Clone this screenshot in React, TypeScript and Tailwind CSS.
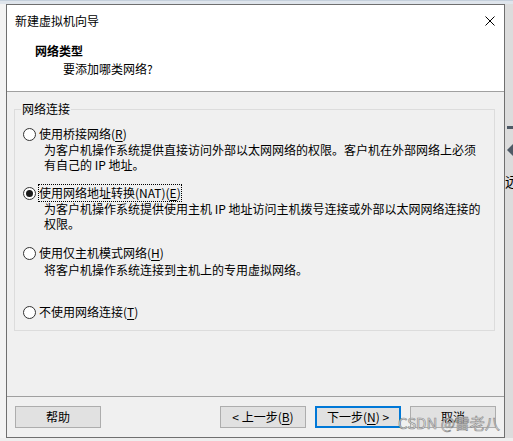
import React from "react";

const FONT = { fontFamily: '"Noto Sans CJK SC", "Noto Sans", sans-serif' };

function Radio({ checked }: { checked?: boolean }) {
  return (
    <span className="w-[13px] h-[13px] rounded-full border border-[#333333] bg-white flex items-center justify-center shrink-0">
      {checked ? <span className="w-[7px] h-[7px] rounded-full bg-[#1a1a1a]" /> : null}
    </span>
  );
}

function Btn({ children, primary }: { children: React.ReactNode; primary?: boolean }) {
  return (
    <div
      className={
        "w-[86px] h-[22px] flex items-center justify-center text-[12px] leading-[16px] text-black bg-[#e1e1e1] " +
        (primary ? "border-2 border-[#0078d7]" : "border border-[#adadad]")
      }
    >
      {children}
    </div>
  );
}

export default function App() {
  return (
    <div className="relative w-[513px] h-[441px] overflow-hidden flex flex-col bg-[#f2f2f2]" style={FONT}>
      <div className="h-[4px] bg-[#dfe5ec] border-t border-[#c5d0dc]" />
      <div className="flex h-[434px]">
        <div className="w-[6px] bg-[#f3f3f3]" />
        <div className="w-[499px] border border-[#6f6f6f] flex flex-col bg-[#f0f0f0]">
          {/* title bar */}
          <div className="h-[31px] bg-white flex items-center justify-between pl-[8px] pr-[9px]">
            <span className="text-[12px] leading-[16px] text-black">新建虚拟机向导</span>
            <svg width="10" height="10" viewBox="0 0 10 10">
              <path d="M0.5 0.5 L9.5 9.5 M9.5 0.5 L0.5 9.5" stroke="#000" strokeWidth="1" fill="none" />
            </svg>
          </div>
          {/* header */}
          <div className="h-[55px] bg-white flex flex-col pt-[7px]">
            <div className="pl-[28px] text-[12px] leading-[16px] font-bold text-black">网络类型</div>
            <div className="pl-[56px] mt-[2px] text-[12px] leading-[16px] text-black">要添加哪类网络?</div>
          </div>
          <div className="h-px bg-[#a0a0a0]" />
          {/* body */}
          <div className="h-[304px] flex flex-col">
            <fieldset className="mt-[9px] ml-[7px] mr-[9px] border border-[#dcdcdc] p-0 m-0 min-w-0">
              <legend className="ml-[6px] px-[1px] text-[12px] leading-[16px] text-black">网络连接</legend>
              <div className="pl-[8px] pt-[9px] pb-[10px] flex flex-col text-[12px] text-black">
                {/* item 1 */}
                <div className="flex items-center h-[16px]">
                  <Radio />
                  <span className="ml-[3px] leading-[16px] whitespace-nowrap">
                    使用桥接网络(<span className="underline underline-offset-2">R</span>)
                  </span>
                </div>
                <div className="ml-[21px] flex flex-col whitespace-nowrap">
                  <span className="leading-[15px]">为客户机操作系统提供直接访问外部以太网网络的权限。客户机在外部网络上必须</span>
                  <span className="leading-[15px]">有自己的 IP 地址。</span>
                </div>
                {/* item 2 */}
                <div className="flex items-center h-[16px] mt-[13px]">
                  <Radio checked />
                  <span className="ml-[3px] leading-[16px] whitespace-nowrap outline-1 outline-dotted outline-black">
                    使用网络地址转换(NAT)(<span className="underline underline-offset-2">E</span>)
                  </span>
                </div>
                <div className="ml-[21px] flex flex-col whitespace-nowrap">
                  <span className="leading-[15px]">为客户机操作系统提供使用主机 IP 地址访问主机拨号连接或外部以太网网络连接的</span>
                  <span className="leading-[15px]">权限。</span>
                </div>
                {/* item 3 */}
                <div className="flex items-center h-[16px] mt-[14px]">
                  <Radio />
                  <span className="ml-[3px] leading-[16px] whitespace-nowrap">
                    使用仅主机模式网络(<span className="underline underline-offset-2">H</span>)
                  </span>
                </div>
                <div className="ml-[21px] mt-px leading-[15px] whitespace-nowrap">
                  将客户机操作系统连接到主机上的专用虚拟网络。
                </div>
                {/* item 4 */}
                <div className="flex items-center h-[16px] mt-[27px]">
                  <Radio />
                  <span className="ml-[3px] leading-[16px] whitespace-nowrap">
                    不使用网络连接(<span className="underline underline-offset-2">T</span>)
                  </span>
                </div>
              </div>
            </fieldset>
          </div>
          <div className="h-px bg-[#a0a0a0]" />
          {/* footer */}
          <div className="h-[40px] flex items-start pt-[9px] pl-[8px] pr-[8px]">
            <Btn>帮助</Btn>
            <div className="flex-1" />
            <div className="flex gap-[9px]">
              <Btn>
                &lt; 上一步(<span className="underline underline-offset-2">B</span>)
              </Btn>
              <Btn primary>
                下一步(<span className="underline underline-offset-2">N</span>) &gt;
              </Btn>
              <Btn>取消</Btn>
            </div>
          </div>
        </div>
        <div className="w-[8px] bg-[#dcdcdc] flex flex-col items-start overflow-hidden">
          <div className="mt-[122px] ml-[2px] w-[8px] h-[3px] bg-[#4f5a66]" />
          <svg className="mt-[14px] ml-[1px]" width="8" height="14" viewBox="0 0 8 14">
            <path d="M8 0 L1 7 L8 14 Z" fill="#4f5a66" />
          </svg>
          <span className="mt-[16px] text-[14px] leading-[16px] text-black whitespace-nowrap">远</span>
        </div>
      </div>
      <div className="flex-1 bg-[#eeeeee]" />
      <div
        className="absolute left-[398px] top-[414px] text-[15px] leading-[18px] whitespace-nowrap text-[rgba(255,255,255,0.85)]"
        style={{ WebkitTextStroke: "0.7px #8c8c8c" }}
      >
        CSDN @雷老八
      </div>
    </div>
  );
}
